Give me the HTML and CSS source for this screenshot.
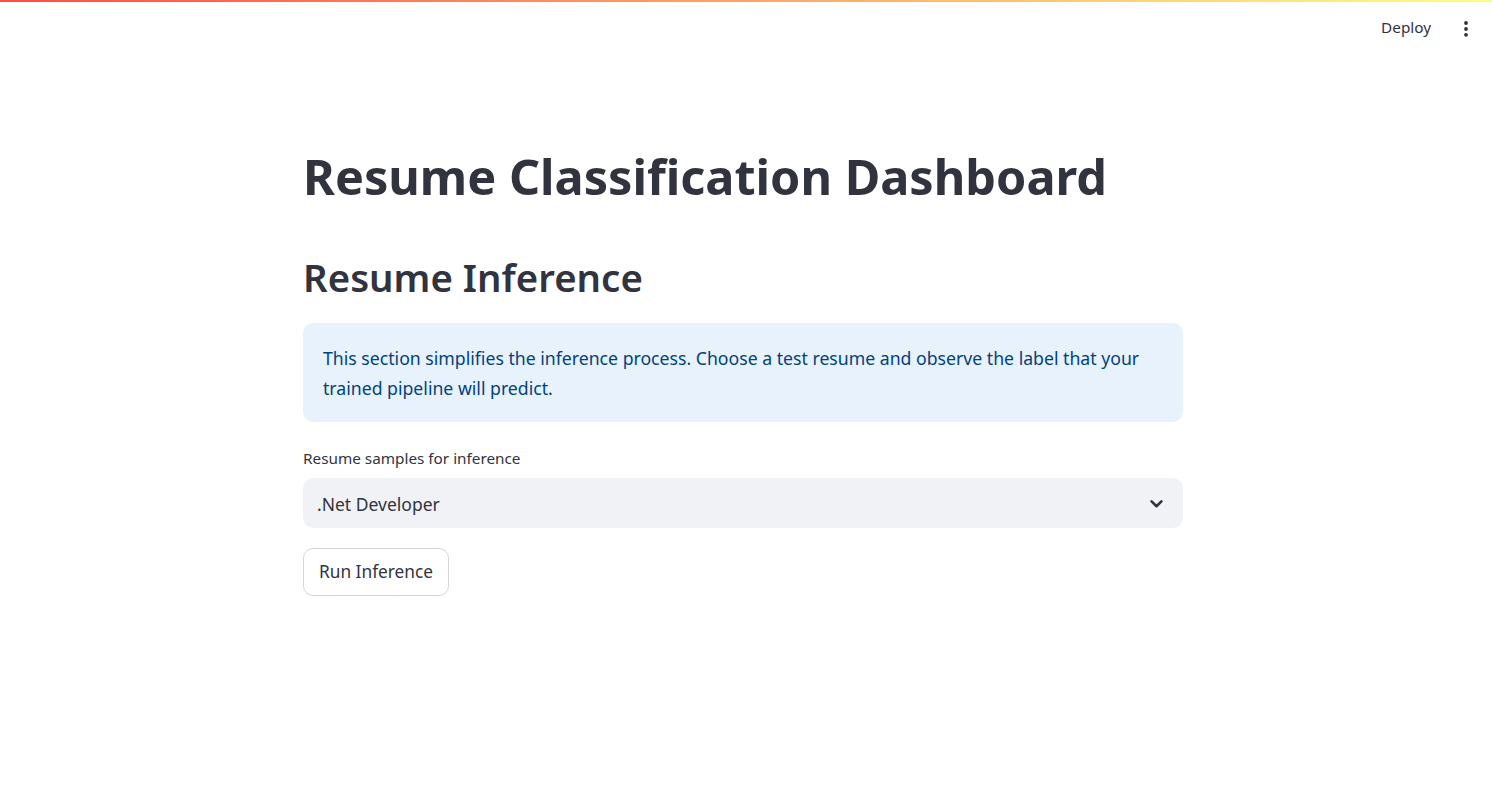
FILE: index.html
```html
<!DOCTYPE html>
<html lang="en">
<head>
<meta charset="utf-8">
<title>Resume Classification Dashboard</title>
<link rel="stylesheet" href="styles.css">
</head>
<body>
<div class="decoration"></div>
<header class="header">
  <span class="deploy">Deploy</span>
  <svg class="kebab" width="24" height="24" viewBox="0 0 24 24" aria-hidden="true">
    <circle cx="12" cy="6" r="1.9"/>
    <circle cx="12" cy="12" r="1.9"/>
    <circle cx="12" cy="17.8" r="1.9"/>
  </svg>
</header>
<main class="main">
  <div class="block">
    <h1 class="title">Resume Classification Dashboard</h1>
    <h2 class="subtitle">Resume Inference</h2>
    <div class="info">This section simplifies the inference process. Choose a test resume and observe the label that your trained pipeline will predict.</div>
    <label class="label">Resume samples for inference</label>
    <div class="select">
      <span class="select-value">.Net Developer</span>
      <svg class="chevron" width="13" height="8" viewBox="0 0 13 8" aria-hidden="true">
        <polyline points="1.6,1.4 6.5,6.2 11.4,1.4"/>
      </svg>
    </div>
    <div class="actions">
      <button class="btn">Run Inference</button>
    </div>
  </div>
</main>
</body>
</html>
```
FILE: styles.css
```css
html, body {
  margin: 0;
  padding: 0;
  background: #ffffff;
}
body {
  font-family: "Noto Sans", "Open Sans", sans-serif;
  color: #31333f;
}
.decoration {
  height: 2px;
  background: linear-gradient(90deg, #ff4b4b, #fffd80);
}
.header {
  height: 53px;
  display: flex;
  align-items: center;
  justify-content: flex-end;
  padding-right: 14px;
}
.deploy {
  font-size: 15.3px;
  line-height: 20px;
  color: #31333f;
  margin-right: 23px;
  padding-bottom: 4px;
}
.kebab {
  display: block;
  fill: #31333f;
}
.main {
  display: flex;
  justify-content: center;
  padding-right: 6px;
  padding-top: 92px;
}
.block {
  width: 880px;
  display: flex;
  flex-direction: column;
}
.title {
  margin: 0;
  font-size: 48.6px;
  font-weight: 700;
  line-height: 58px;
  color: #31333f;
}
.subtitle {
  margin: 49px 0 0;
  font-size: 38.4px;
  font-weight: 600;
  line-height: 46px;
  color: #31333f;
}
.info {
  margin-top: 23px;
  background: #e8f2fc;
  color: #004280;
  border-radius: 10px;
  padding: 20px 20px 19px;
  font-size: 17.66px;
  line-height: 30px;
}
.label {
  margin-top: 26px;
  font-size: 15.3px;
  line-height: 21px;
  color: #31333f;
}
.select {
  margin-top: 9px;
  height: 50px;
  background: #f0f2f6;
  border-radius: 10px;
  display: flex;
  align-items: center;
  justify-content: space-between;
  padding: 2px 20px 0 14px;
  box-sizing: border-box;
}
.select-value {
  font-size: 17.5px;
  color: #31333f;
}
.chevron {
  display: block;
  fill: none;
  stroke: #31333f;
  stroke-width: 2.6;
  stroke-linecap: round;
  stroke-linejoin: round;
}
.actions {
  margin-top: 20px;
  display: flex;
}
.btn {
  font-family: "Noto Sans", "Open Sans", sans-serif;
  font-size: 17.3px;
  color: #31333f;
  background: #ffffff;
  border: 1px solid #d6d6d9;
  border-radius: 10px;
  height: 47.5px;
  padding: 0 15px;
  line-height: 1;
}
```
